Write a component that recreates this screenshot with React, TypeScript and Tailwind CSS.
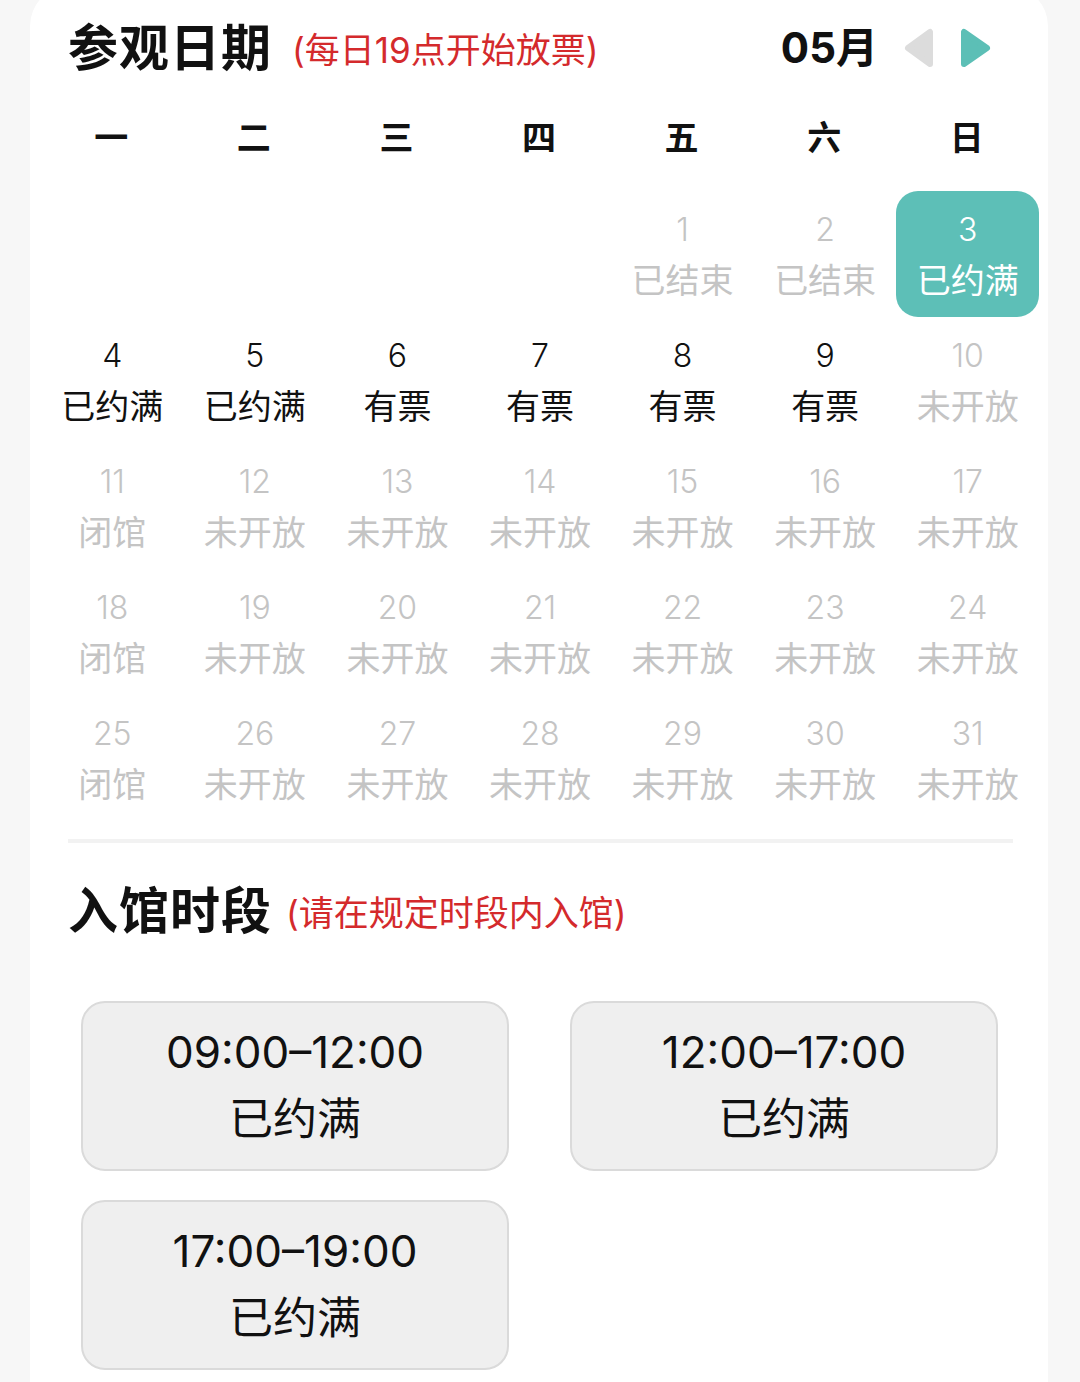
import React from "react";

type Cell = { d?: number; s?: string; tone?: "gray" | "black" | "sel" };

const G = "gray" as const;
const B = "black" as const;

const rows: Cell[][] = [
  [{}, {}, {}, {}, { d: 1, s: "已结束", tone: G }, { d: 2, s: "已结束", tone: G }, { d: 3, s: "已约满", tone: "sel" }],
  [
    { d: 4, s: "已约满", tone: B },
    { d: 5, s: "已约满", tone: B },
    { d: 6, s: "有票", tone: B },
    { d: 7, s: "有票", tone: B },
    { d: 8, s: "有票", tone: B },
    { d: 9, s: "有票", tone: B },
    { d: 10, s: "未开放", tone: G },
  ],
  [11, 12, 13, 14, 15, 16, 17].map((d, i) => ({ d, s: i === 0 ? "闭馆" : "未开放", tone: G })),
  [18, 19, 20, 21, 22, 23, 24].map((d, i) => ({ d, s: i === 0 ? "闭馆" : "未开放", tone: G })),
  [25, 26, 27, 28, 29, 30, 31].map((d, i) => ({ d, s: i === 0 ? "闭馆" : "未开放", tone: G })),
];

const weekdays = ["一", "二", "三", "四", "五", "六", "日"];

const slots = ["09:00–12:00", "12:00–17:00", "17:00–19:00"];

const font = { fontFamily: '"Inter","Noto Sans CJK SC",sans-serif' };

export default function App() {
  return (
    <div className="min-h-[1382px] w-[1080px] bg-[#f7f7f7] overflow-hidden" style={font}>
      <div className="ml-[30px] mt-[-14px] w-[1018px] min-h-[1400px] bg-white rounded-t-[40px]">
        {/* header */}
        <div className="h-[110px] pt-[14px] flex items-center pl-[38px] pr-[56px]">
          <span className="text-[50px] font-bold leading-none text-[#111] tracking-[1px]">参观日期</span>
          <span className="ml-[20px] text-[35px] leading-none text-[#d42a2c] mt-[4px]">(每日19点开始放票)</span>
          <span className="ml-auto text-[42px] font-bold leading-none text-[#111]">05月</span>
          <svg className="ml-[26px]" width="30" height="40" viewBox="0 0 30 40">
            <path d="M26 4 L26 36 L4 20 Z" fill="#dcdcdc" stroke="#dcdcdc" strokeWidth="6" strokeLinejoin="round" />
          </svg>
          <svg className="ml-[26px]" width="32" height="40" viewBox="0 0 32 40">
            <path d="M4 4 L4 36 L27 20 Z" fill="#5cbfb6" stroke="#5cbfb6" strokeWidth="6" strokeLinejoin="round" />
          </svg>
        </div>

        {/* weekdays */}
        <div className="grid grid-cols-7 px-[10px] h-[84px] items-center">
          {weekdays.map((w) => (
            <div key={w} className="text-center text-[34px] font-bold text-[#111] leading-none">
              {w}
            </div>
          ))}
        </div>

        {/* dates */}
        <div className="pl-[11px] pr-[9px] pt-[11px]">
          {rows.map((r, ri) => (
            <div key={ri} className="grid grid-cols-7">
              {r.map((c, ci) => {
                const color =
                  c.tone === "sel" ? "text-white" : c.tone === "black" ? "text-[#111]" : "text-[#c4c4c4]";
                return (
                  <div
                    key={ci}
                    className={`h-[126px] flex flex-col items-center pt-[19px] ${
                      c.tone === "sel" ? "bg-[#5dbfb7] rounded-[22px]" : ""
                    } ${color}`}
                  >
                    {c.d !== undefined && (
                      <>
                        <div className="text-[32px] leading-[40px] font-light">{c.d}</div>
                        <div className="mt-[9px] text-[34px] leading-[44px]">{c.s}</div>
                      </>
                    )}
                  </div>
                );
              })}
            </div>
          ))}
        </div>

        {/* divider */}
        <div className="mt-[18px] ml-[38px] mr-[35px] h-[4px] bg-[#f2f2f2]" />

        {/* second header */}
        <div className="h-[136px] flex items-center pl-[38px]">
          <span className="text-[50px] font-bold leading-none text-[#111] tracking-[1px]">入馆时段</span>
          <span className="ml-[14px] text-[35px] leading-none text-[#d42a2c] mt-[4px]">(请在规定时段内入馆)</span>
        </div>

        {/* slots */}
        <div className="mt-[22px] grid grid-cols-2 gap-x-[61px] gap-y-[29px] pl-[51px] pr-[50px]">
          {slots.map((t) => (
            <div
              key={t}
              className="h-[170px] rounded-[24px] bg-[#efefef] border-2 border-[#dadada] flex flex-col items-center justify-center text-[#111]"
            >
              <div className="text-[44px] leading-[67px]">{t}</div>
              <div className="text-[44px] leading-[67px]">已约满</div>
            </div>
          ))}
        </div>
      </div>
    </div>
  );
}
